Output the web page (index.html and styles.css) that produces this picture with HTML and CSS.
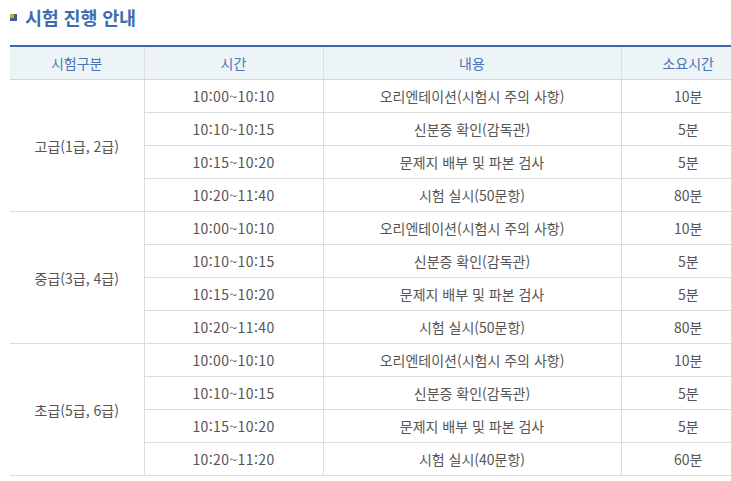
FILE: index.html
```html
<!DOCTYPE html>
<html lang="ko">
<head>
<meta charset="utf-8">
<link rel="stylesheet" href="styles.css">
</head>
<body>
<h2 class="title"><span class="bullet"><span class="bullet-dot"></span></span>시험 진행 안내</h2>
<table class="schedule">
  <colgroup>
    <col class="c1"><col class="c2"><col class="c3"><col class="c4">
  </colgroup>
  <thead>
    <tr><th>시험구분</th><th>시간</th><th>내용</th><th>소요시간</th></tr>
  </thead>
  <tbody>
    <tr><td rowspan="4">고급(1급, 2급)</td><td>10:00~10:10</td><td>오리엔테이션(시험시 주의 사항)</td><td>10분</td></tr>
    <tr><td>10:10~10:15</td><td>신분증 확인(감독관)</td><td>5분</td></tr>
    <tr><td>10:15~10:20</td><td>문제지 배부 및 파본 검사</td><td>5분</td></tr>
    <tr><td>10:20~11:40</td><td>시험 실시(50문항)</td><td>80분</td></tr>
    <tr><td rowspan="4">중급(3급, 4급)</td><td>10:00~10:10</td><td>오리엔테이션(시험시 주의 사항)</td><td>10분</td></tr>
    <tr><td>10:10~10:15</td><td>신분증 확인(감독관)</td><td>5분</td></tr>
    <tr><td>10:15~10:20</td><td>문제지 배부 및 파본 검사</td><td>5분</td></tr>
    <tr><td>10:20~11:40</td><td>시험 실시(50문항)</td><td>80분</td></tr>
    <tr><td rowspan="4">초급(5급, 6급)</td><td>10:00~10:10</td><td>오리엔테이션(시험시 주의 사항)</td><td>10분</td></tr>
    <tr><td>10:10~10:15</td><td>신분증 확인(감독관)</td><td>5분</td></tr>
    <tr><td>10:15~10:20</td><td>문제지 배부 및 파본 검사</td><td>5분</td></tr>
    <tr><td>10:20~11:20</td><td>시험 실시(40문항)</td><td>60분</td></tr>
  </tbody>
</table>
</body>
</html>
```
FILE: styles.css
```css
html, body {
  margin: 0;
  padding: 0;
  background: #fff;
}
body {
  font-family: "Noto Sans CJK KR", "Noto Sans", sans-serif;
  width: 731px;
  overflow: hidden;
}
.title {
  display: flex;
  align-items: center;
  margin: 0;
  padding: 4px 0 0 10px;
  height: 26px;
  font-size: 18.5px;
  font-weight: bold;
  color: #3f6cb0;
  line-height: 26px;
  letter-spacing: -0.2px;
}
.bullet {
  position: relative;
  display: inline-block;
  width: 7px;
  height: 7px;
  background: #3b5f97;
  margin-right: 8px;
  margin-top: 1px;
}
.bullet-dot {
  position: absolute;
  left: 0;
  top: 0;
  width: 4px;
  height: 4px;
  background: #d9a51c;
}
.schedule {
  margin: 15px 0 0 10px;
  width: 745px;
  border-collapse: collapse;
  table-layout: fixed;
  border-top: 2px solid #3d68a8;
  font-size: 14px;
}
.c1 { width: 134px; }
.c2 { width: 179px; }
.c3 { width: 298px; }
.c4 { width: 134px; }
.schedule th {
  height: 32px;
  padding: 0;
  background: #edf4f8;
  color: #4a74b3;
  font-weight: normal;
  border-bottom: 1px solid #d6d6d6;
  border-left: 1px solid #dcdcdc;
  text-align: center;
  line-height: 20px;
}
.schedule td {
  height: 32px;
  padding: 0;
  color: #555;
  border-bottom: 1px solid #dcdcdc;
  border-left: 1px solid #dcdcdc;
  text-align: center;
  line-height: 20px;
}
.schedule td:nth-last-child(3),
.schedule td[rowspan] + td {
  letter-spacing: 0.4px;
}
.schedule th:first-child,
.schedule td[rowspan] {
  border-left: none;
}
```
